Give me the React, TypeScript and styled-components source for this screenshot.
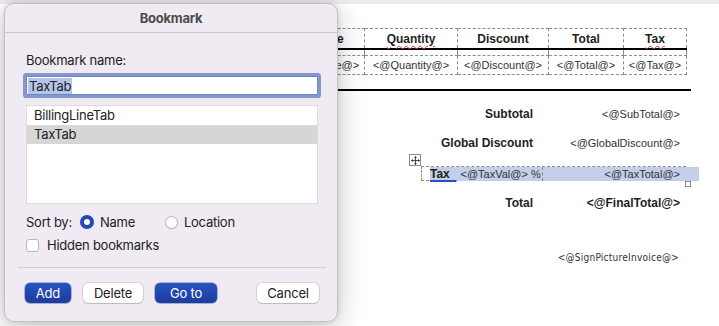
import { FC } from "react";
import styled, { createGlobalStyle } from "styled-components";

const GlobalStyle = createGlobalStyle`
    html, body {
        margin: 0;
        padding: 0;
    }
    body {
        width: 719px;
        height: 326px;
        overflow: hidden;
        background: #ffffff;
        font-family: "Liberation Sans", Arial, sans-serif;
    }
`;

const Screen = styled.div`
    position: relative;
    width: 719px;
    height: 326px;
    overflow: hidden;
    background: #ffffff;
`;

const TopStrip = styled.div`
    height: 4px;
    background: #ececec;
`;

/* ---------- document behind the sheet ---------- */

const Page = styled.div`
    padding-top: 24px;
    color: #1e1e1e;
`;

const ItemsTable = styled.table`
    margin-left: 92px;
    border-collapse: collapse;
    table-layout: fixed;
    width: 588px;
`;

const HeadCell = styled.th<{ $w: number }>`
    width: ${(p) => p.$w}px;
    height: 19px;
    padding: 0;
    font-size: 12px;
    font-weight: 700;
    text-align: center;
    border: 1px dashed #8c8c8c;
    border-bottom: 2px solid #000;
`;

const Spell = styled.span`
    text-decoration: underline wavy #d8352a;
    text-decoration-thickness: 1.2px;
    text-underline-offset: 2px;
`;

const SpacerCell = styled.td`
    height: 5px;
    padding: 0;
    border-left: 1px dashed #8c8c8c;
    border-right: 1px dashed #8c8c8c;
    border-bottom: 1px dashed #8c8c8c;
`;

const DataCell = styled.td`
    height: 18px;
    padding: 0;
    font-size: 11px;
    text-align: center;
    color: #333;
    border: 1px dashed #8c8c8c;
    border-top: none;
`;

const Rule = styled.div`
    margin: 14px 0 0 330px;
    width: 361px;
    height: 2px;
    background: #000;
`;

const Totals = styled.div`
    margin-left: 421px;
    width: 265px;
`;

const TotalRow = styled.div<{ $top: number; $boxed?: boolean }>`
    position: relative;
    display: grid;
    grid-template-columns: 121px 144px;
    align-items: center;
    height: ${(p) => (p.$boxed ? 13 : 18)}px;
    margin-top: ${(p) => p.$top}px;
    border: ${(p) => (p.$boxed ? "1px dashed #8c8c8c" : "1px solid transparent")};
`;

const Label = styled.div`
    font-size: 12px;
    font-weight: 700;
    text-align: right;
    padding-right: 10px;
    color: #1e1e1e;
`;

const Value = styled.div<{ $bold?: boolean }>`
    font-size: ${(p) => (p.$bold ? 12 : 11)}px;
    font-weight: ${(p) => (p.$bold ? 700 : 400)};
    text-align: right;
    padding-right: 7px;
    color: ${(p) => (p.$bold ? "#1e1e1e" : "#333")};
`;

const TaxLeft = styled.div`
    height: 100%;
    margin-left: 8px;
    display: flex;
    align-items: center;
    gap: 4px;
    background: #c3cfe9;
    border-right: 1px dashed #8c8c8c;
`;

const TaxWord = styled.span`
    font-size: 12px;
    font-weight: 700;
    text-decoration: underline #2b4fb8;
    text-decoration-thickness: 1.5px;
    text-underline-offset: 2px;
    white-space: pre;
`;

const TaxVal = styled.span`
    font-size: 11px;
    color: #333;
`;

const TaxRight = styled.div`
    height: 100%;
    display: flex;
    align-items: center;
    justify-content: flex-end;
    background: #c3cfe9;
    margin-right: -12px;
    padding-right: 19px;
    font-size: 11px;
    color: #333;
`;

const MoveHandle = styled.div`
    position: absolute;
    left: -13px;
    top: -13px;
    width: 10px;
    height: 10px;
    border: 1px solid #8a8a8a;
    background: #fff;
    display: flex;
    align-items: center;
    justify-content: center;
`;

const ResizeHandle = styled.div`
    position: absolute;
    right: -6px;
    bottom: -7px;
    width: 4px;
    height: 4px;
    border: 1px solid #8a8a8a;
    background: #fff;
`;

const Sign = styled.div`
    margin: 39px 0 0 0;
    width: 679px;
    text-align: right;
    font-family: "DejaVu Sans Condensed", "DejaVu Sans", sans-serif;
    font-size: 10px;
    letter-spacing: 0.25px;
    color: #333;
`;

/* ---------- bookmark sheet ---------- */

const Sheet = styled.div`
    position: absolute;
    left: 4px;
    top: 3px;
    width: 334px;
    height: 319px;
    box-sizing: border-box;
    border-radius: 10px;
    background: #f0ebf2;
    border: 1px solid #c4c0c6;
    box-shadow: 0 6px 28px rgba(0, 0, 0, 0.22), 0 0 6px rgba(0, 0, 0, 0.12);
    font-family: "Inter", "Noto Sans", sans-serif;
    font-size: 13px;
    letter-spacing: -0.25px;
    color: #222;
    display: flex;
    flex-direction: column;
`;

const TitleBar = styled.div`
    height: 28px;
    display: flex;
    align-items: center;
    justify-content: center;
    font-weight: 700;
    color: #4a4a4a;
    border-bottom: 1px solid #c9c4cc;
`;

const Body = styled.div`
    padding: 19px 19px 0 21px;
    display: flex;
    flex-direction: column;
`;

const FieldLabel = styled.div`
    line-height: 16px;
`;

const NameInput = styled.div`
    margin-top: 8px;
    height: 17px;
    padding-left: 1px;
    background: #fff;
    border: 1px solid #7085c4;
    box-shadow: 0 0 0 3px #8597cf;
    border-radius: 1px;
    display: flex;
    align-items: center;
    line-height: 16px;
`;

const Selected = styled.span`
    background: #b3c5e9;
    padding: 0 1px;
`;

const List = styled.div`
    margin-top: 10px;
    height: 97px;
    background: #fff;
    border: 1px solid #dedbe0;
    display: flex;
    flex-direction: column;
`;

const ListItem = styled.div<{ $active?: boolean }>`
    height: 19px;
    line-height: 19px;
    padding-left: 7px;
    background: ${(p) => (p.$active ? "#d6d6d6" : "transparent")};
`;

const SortRow = styled.div`
    margin-top: 10px;
    display: flex;
    align-items: center;
    height: 16px;
`;

const SortLabel = styled.span`
    margin-right: 8px;
`;

const RadioItem = styled.label`
    display: flex;
    align-items: center;
    gap: 6px;
    margin-right: 30px;
`;

const RadioDot = styled.span<{ $on?: boolean }>`
    width: ${(p) => (p.$on ? 14 : 13)}px;
    height: ${(p) => (p.$on ? 14 : 13)}px;
    box-sizing: border-box;
    border-radius: 50%;
    background: #fff;
    border: ${(p) => (p.$on ? "4.5px solid #2348b5" : "1px solid #b9b6bb")};
    box-shadow: ${(p) => (p.$on ? "none" : "0 0.5px 1px rgba(0,0,0,0.12)")};
`;

const CheckRow = styled.label`
    margin-top: 7px;
    display: flex;
    align-items: center;
    gap: 8px;
    height: 16px;
`;

const CheckBox = styled.span`
    width: 13px;
    height: 13px;
    box-sizing: border-box;
    border-radius: 3px;
    background: #fff;
    border: 1px solid #b9b6bb;
`;

const Divider = styled.div`
    margin: 14px 11px 0 13px;
    height: 1px;
    background: #d3ced5;
`;

const Buttons = styled.div`
    padding: 15px 18px 0 20px;
    display: flex;
    align-items: center;
    gap: 12px;
`;

const Button = styled.button<{ $primary?: boolean; $w: number; $push?: boolean }>`
    -webkit-appearance: none;
    appearance: none;
    width: ${(p) => p.$w}px;
    height: 20px;
    padding: 0;
    margin-left: ${(p) => (p.$push ? "auto" : "0")};
    font-family: "Inter", "Noto Sans", sans-serif;
    font-size: 13px;
    letter-spacing: -0.2px;
    border-radius: 5px;
    border: none;
    color: ${(p) => (p.$primary ? "#fff" : "#222")};
    background: ${(p) =>
        p.$primary ? "linear-gradient(#2a52c2, #1c3c9f)" : "#fff"};
    box-shadow: ${(p) =>
        p.$primary
            ? "0 0 0 0.5px rgba(20,40,120,0.6)"
            : "0 0 0 0.5px rgba(0,0,0,0.22), 0 1px 1px rgba(0,0,0,0.12)"};
`;

const MoveIcon: FC = () => (
    <svg width="9" height="9" viewBox="0 0 9 9" fill="none" stroke="#333" strokeWidth="0.9">
        <path d="M4.5 0.5v8M0.5 4.5h8" />
        <path d="M3.3 1.7l1.2-1.2 1.2 1.2M3.3 7.3l1.2 1.2 1.2-1.2M1.7 3.3L0.5 4.5l1.2 1.2M7.3 3.3l1.2 1.2-1.2 1.2" />
    </svg>
);

const App: FC = () => {
    return (
        <Screen>
            <GlobalStyle />
            <TopStrip />
            <Page>
                <ItemsTable>
                    <thead>
                        <tr>
                            <HeadCell $w={200}>Description</HeadCell>
                            <HeadCell $w={70}>Price</HeadCell>
                            <HeadCell $w={92}>
                                <Spell>Quantity</Spell>
                            </HeadCell>
                            <HeadCell $w={90}>Discount</HeadCell>
                            <HeadCell $w={74}>Total</HeadCell>
                            <HeadCell $w={62}>
                                <Spell>Tax</Spell>
                            </HeadCell>
                        </tr>
                    </thead>
                    <tbody>
                        <tr>
                            <SpacerCell />
                            <SpacerCell />
                            <SpacerCell />
                            <SpacerCell />
                            <SpacerCell />
                            <SpacerCell />
                        </tr>
                        <tr>
                            <DataCell>{"<@Description@>"}</DataCell>
                            <DataCell>{"<@Price@>"}</DataCell>
                            <DataCell>{"<@Quantity@>"}</DataCell>
                            <DataCell>{"<@Discount@>"}</DataCell>
                            <DataCell>{"<@Total@>"}</DataCell>
                            <DataCell>{"<@Tax@>"}</DataCell>
                        </tr>
                    </tbody>
                </ItemsTable>
                <Rule />
                <Totals>
                    <TotalRow $top={13}>
                        <Label>Subtotal</Label>
                        <Value>{"<@SubTotal@>"}</Value>
                    </TotalRow>
                    <TotalRow $top={9}>
                        <Label>Global Discount</Label>
                        <Value>{"<@GlobalDiscount@>"}</Value>
                    </TotalRow>
                    <TotalRow $top={13} $boxed>
                        <MoveHandle>
                            <MoveIcon />
                        </MoveHandle>
                        <TaxLeft>
                            <TaxWord>{"Tax  "}</TaxWord>
                            <TaxVal>{"<@TaxVal@> %"}</TaxVal>
                        </TaxLeft>
                        <TaxRight>{"<@TaxTotal@>"}</TaxRight>
                        <ResizeHandle />
                    </TotalRow>
                    <TotalRow $top={12}>
                        <Label>Total</Label>
                        <Value $bold>{"<@FinalTotal@>"}</Value>
                    </TotalRow>
                </Totals>
                <Sign>{"<@SignPictureInvoice@>"}</Sign>
            </Page>

            <Sheet>
                <TitleBar>Bookmark</TitleBar>
                <Body>
                    <FieldLabel>Bookmark name:</FieldLabel>
                    <NameInput>
                        <Selected>TaxTab</Selected>
                    </NameInput>
                    <List>
                        <ListItem>BillingLineTab</ListItem>
                        <ListItem $active>TaxTab</ListItem>
                    </List>
                    <SortRow>
                        <SortLabel>Sort by:</SortLabel>
                        <RadioItem>
                            <RadioDot $on />
                            Name
                        </RadioItem>
                        <RadioItem>
                            <RadioDot />
                            Location
                        </RadioItem>
                    </SortRow>
                    <CheckRow>
                        <CheckBox />
                        Hidden bookmarks
                    </CheckRow>
                </Body>
                <Divider />
                <Buttons>
                    <Button $primary $w={46}>Add</Button>
                    <Button $w={60}>Delete</Button>
                    <Button $primary $w={62}>Go to</Button>
                    <Button $w={62} $push>Cancel</Button>
                </Buttons>
            </Sheet>
        </Screen>
    );
};

export default App;
